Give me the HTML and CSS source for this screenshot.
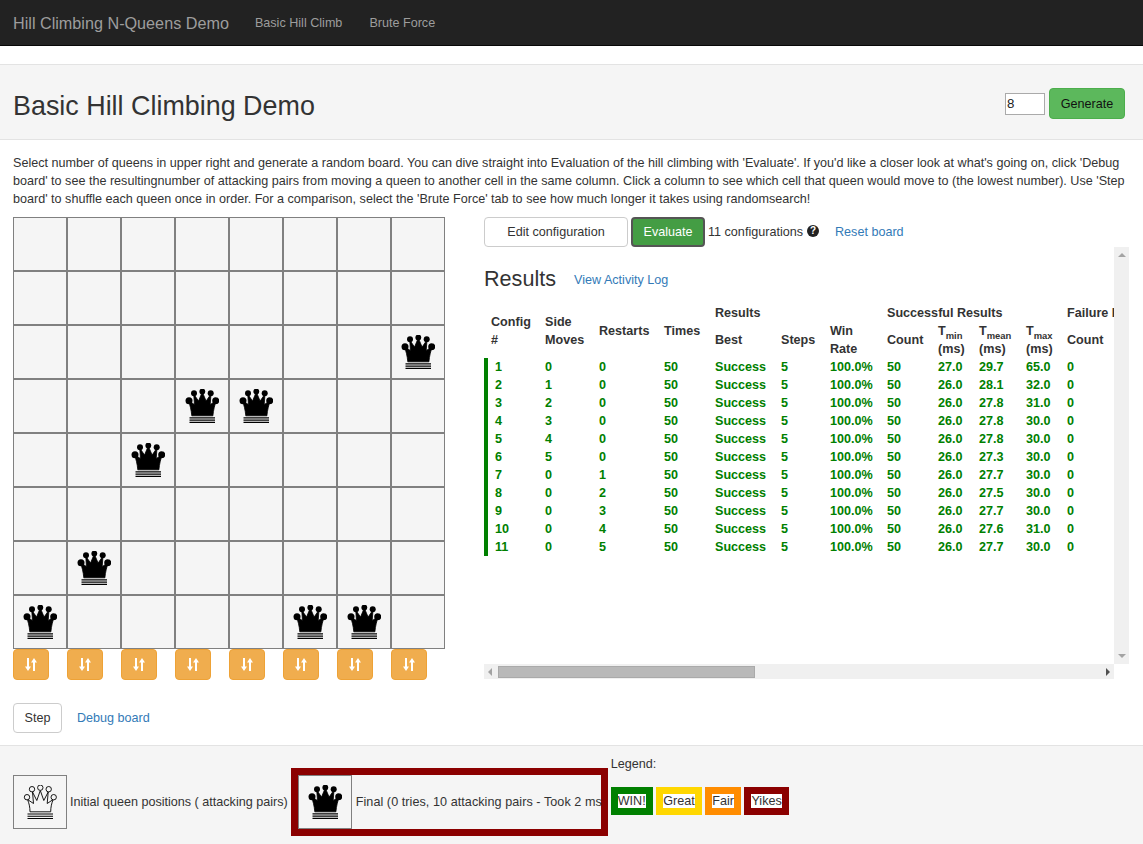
FILE: index.html
```html
<!DOCTYPE html>
<html lang="en">
<head>
	<meta charset="UTF-8">
	<title>Hill Climbing N-Queens Demo</title>
	<link rel="stylesheet" href="styles.css">
</head>
<body>
	<svg class="defs" width="0" height="0">
		<symbol id="queen-black" viewBox="0 0 34 34">
			<circle cx="9" cy="4.200" r="3"/>
			<circle cx="17.300" cy="2.500" r="2.900"/>
			<circle cx="25.700" cy="4.200" r="3"/>
			<circle cx="4" cy="11.800" r="3.500"/>
			<circle cx="30.700" cy="11.800" r="3.500"/>
			<path d="M6.800 26.800 C6.300 21 5 16 3.500 12 L9.500 15.500 L8.700 5 L13.500 12 L17.300 3 L21.100 12 L26 5 L25.200 15.500 L31.200 12 C29.700 16 28.400 21 27.900 26.800 Z" stroke="#000" stroke-width=".8"/>
			<path d="M4.500 28.300h25.500v1.300H4.500zM4.500 30.500h25.500v1.300H4.500zM4.500 32.700h25.500v1.300H4.500z"/>
		</symbol>
		<symbol id="queen-white" viewBox="0 0 34 34">
			<path d="M7 26.800 C7 22 6 18 4.500 14.500 L10.500 18.500 L9.500 7 L13.800 15.500 L17.300 5.500 L20.800 15.500 L25.200 7 L24.200 18.500 L30.200 14.500 C28.700 18 27.700 22 27.700 26.800 Z" fill="#f5f5f5" stroke="#000" stroke-width=".9"/>
			<circle cx="9" cy="4.200" r="2.700" fill="#f5f5f5" stroke="#000" stroke-width=".9"/>
			<circle cx="17.300" cy="2.700" r="2.700" fill="#f5f5f5" stroke="#000" stroke-width=".9"/>
			<circle cx="25.700" cy="4.200" r="2.700" fill="#f5f5f5" stroke="#000" stroke-width=".9"/>
			<circle cx="4" cy="12.200" r="2.700" fill="#f5f5f5" stroke="#000" stroke-width=".9"/>
			<circle cx="30.700" cy="12.200" r="2.700" fill="#f5f5f5" stroke="#000" stroke-width=".9"/>
			<path d="M4.500 28.500h25.500v1H4.500zM4.500 30.700h25.500v1H4.500zM4.500 32.900h25.500v1H4.500z"/>
		</symbol>
		<symbol id="sort" viewBox="0 0 12 13">
			<path d="M2 0h2v8.500h2L3 13 0 8.500h2z"/>
			<path d="M8 13h2V4.500h2L9 0 6 4.500h2z"/>
		</symbol>
	</svg>

	<div class="navbar">
		<a class="brand" href="#">Hill Climbing N-Queens Demo</a>
		<a class="nav-link" href="#">Basic Hill Climb</a>
		<a class="nav-link" href="#">Brute Force</a>
	</div>

	<div class="page-header">
		<h1>Basic Hill Climbing Demo</h1>
		<div class="generate">
			<input class="size-input" type="text" value="8">
			<button class="btn btn-generate">Generate</button>
		</div>
	</div>

	<p class="intro">Select number of queens in upper right and generate a random board. You can dive straight into Evaluation of the hill climbing with 'Evaluate'. If you'd like a closer look at what's going on, click 'Debug board' to see the resultingnumber of attacking pairs from moving a queen to another cell in the same column. Click a column to see which cell that queen would move to (the lowest number). Use 'Step board' to shuffle each queen once in order. For a comparison, select the 'Brute Force' tab to see how much longer it takes using randomsearch!</p>

	<div class="main">
		<div class="left">
			<div class="board">
				<div class="cell"></div><div class="cell"></div><div class="cell"></div><div class="cell"></div><div class="cell"></div><div class="cell"></div><div class="cell"></div><div class="cell"></div>
				<div class="cell"></div><div class="cell"></div><div class="cell"></div><div class="cell"></div><div class="cell"></div><div class="cell"></div><div class="cell"></div><div class="cell"></div>
				<div class="cell"></div><div class="cell"></div><div class="cell"></div><div class="cell"></div><div class="cell"></div><div class="cell"></div><div class="cell"></div><div class="cell"><svg class="queen"><use href="#queen-black"/></svg></div>
				<div class="cell"></div><div class="cell"></div><div class="cell"></div><div class="cell"><svg class="queen"><use href="#queen-black"/></svg></div><div class="cell"><svg class="queen"><use href="#queen-black"/></svg></div><div class="cell"></div><div class="cell"></div><div class="cell"></div>
				<div class="cell"></div><div class="cell"></div><div class="cell"><svg class="queen"><use href="#queen-black"/></svg></div><div class="cell"></div><div class="cell"></div><div class="cell"></div><div class="cell"></div><div class="cell"></div>
				<div class="cell"></div><div class="cell"></div><div class="cell"></div><div class="cell"></div><div class="cell"></div><div class="cell"></div><div class="cell"></div><div class="cell"></div>
				<div class="cell"></div><div class="cell"><svg class="queen"><use href="#queen-black"/></svg></div><div class="cell"></div><div class="cell"></div><div class="cell"></div><div class="cell"></div><div class="cell"></div><div class="cell"></div>
				<div class="cell"><svg class="queen"><use href="#queen-black"/></svg></div><div class="cell"></div><div class="cell"></div><div class="cell"></div><div class="cell"></div><div class="cell"><svg class="queen"><use href="#queen-black"/></svg></div><div class="cell"><svg class="queen"><use href="#queen-black"/></svg></div><div class="cell"></div>
			</div>
			<div class="shuffle-row">
				<button class="shuffle"><svg class="sort-icon"><use href="#sort"/></svg></button>
				<button class="shuffle"><svg class="sort-icon"><use href="#sort"/></svg></button>
				<button class="shuffle"><svg class="sort-icon"><use href="#sort"/></svg></button>
				<button class="shuffle"><svg class="sort-icon"><use href="#sort"/></svg></button>
				<button class="shuffle"><svg class="sort-icon"><use href="#sort"/></svg></button>
				<button class="shuffle"><svg class="sort-icon"><use href="#sort"/></svg></button>
				<button class="shuffle"><svg class="sort-icon"><use href="#sort"/></svg></button>
				<button class="shuffle"><svg class="sort-icon"><use href="#sort"/></svg></button>
			</div>
			<div class="step-row">
				<button class="btn btn-step">Step</button>
				<a href="#">Debug board</a>
			</div>
		</div>

		<div class="right">
			<div class="toolbar">
				<button class="btn btn-edit">Edit configuration</button>
				<button class="btn btn-evaluate">Evaluate</button>
				<span class="config-count">11 configurations</span>
				<span class="help">?</span>
				<a class="reset" href="#">Reset board</a>
			</div>
			<div class="results-frame">
				<div class="results">
					<div class="results-head">
						<h3>Results</h3>
						<a class="log-link" href="#">View Activity Log</a>
					</div>
					<table class="results-table">
						<colgroup>
							<col class="col-54"><col class="col-54"><col class="col-65"><col class="col-51">
							<col class="col-66"><col class="col-49"><col class="col-57">
							<col class="col-51"><col class="col-41"><col class="col-47"><col class="col-41">
							<col class="col-51"><col class="col-41"><col class="col-47"><col>
						</colgroup>
						<thead>
							<tr>
								<th rowspan="2">Config<br>#</th>
								<th rowspan="2">Side<br>Moves</th>
								<th rowspan="2">Restarts</th>
								<th rowspan="2">Times</th>
								<th colspan="3" class="group">Results</th>
								<th colspan="4" class="group">Successful Results</th>
								<th colspan="4" class="group">Failure Results</th>
							</tr>
							<tr>
								<th>Best</th>
								<th>Steps</th>
								<th>Win<br>Rate</th>
								<th>Count</th>
								<th>T<sub>min</sub><br>(ms)</th>
								<th>T<sub>mean</sub><br>(ms)</th>
								<th>T<sub>max</sub><br>(ms)</th>
								<th>Count</th>
								<th>T<sub>min</sub><br>(ms)</th>
								<th>T<sub>mean</sub><br>(ms)</th>
								<th>T<sub>max</sub><br>(ms)</th>
							</tr>
						</thead>
						<tbody>
							<tr><td>1</td><td>0</td><td>0</td><td>50</td><td>Success</td><td>5</td><td>100.0%</td><td>50</td><td>27.0</td><td>29.7</td><td>65.0</td><td>0</td><td></td><td></td><td></td></tr>
							<tr><td>2</td><td>1</td><td>0</td><td>50</td><td>Success</td><td>5</td><td>100.0%</td><td>50</td><td>26.0</td><td>28.1</td><td>32.0</td><td>0</td><td></td><td></td><td></td></tr>
							<tr><td>3</td><td>2</td><td>0</td><td>50</td><td>Success</td><td>5</td><td>100.0%</td><td>50</td><td>26.0</td><td>27.8</td><td>31.0</td><td>0</td><td></td><td></td><td></td></tr>
							<tr><td>4</td><td>3</td><td>0</td><td>50</td><td>Success</td><td>5</td><td>100.0%</td><td>50</td><td>26.0</td><td>27.8</td><td>30.0</td><td>0</td><td></td><td></td><td></td></tr>
							<tr><td>5</td><td>4</td><td>0</td><td>50</td><td>Success</td><td>5</td><td>100.0%</td><td>50</td><td>26.0</td><td>27.8</td><td>30.0</td><td>0</td><td></td><td></td><td></td></tr>
							<tr><td>6</td><td>5</td><td>0</td><td>50</td><td>Success</td><td>5</td><td>100.0%</td><td>50</td><td>26.0</td><td>27.3</td><td>30.0</td><td>0</td><td></td><td></td><td></td></tr>
							<tr><td>7</td><td>0</td><td>1</td><td>50</td><td>Success</td><td>5</td><td>100.0%</td><td>50</td><td>26.0</td><td>27.7</td><td>30.0</td><td>0</td><td></td><td></td><td></td></tr>
							<tr><td>8</td><td>0</td><td>2</td><td>50</td><td>Success</td><td>5</td><td>100.0%</td><td>50</td><td>26.0</td><td>27.5</td><td>30.0</td><td>0</td><td></td><td></td><td></td></tr>
							<tr><td>9</td><td>0</td><td>3</td><td>50</td><td>Success</td><td>5</td><td>100.0%</td><td>50</td><td>26.0</td><td>27.7</td><td>30.0</td><td>0</td><td></td><td></td><td></td></tr>
							<tr><td>10</td><td>0</td><td>4</td><td>50</td><td>Success</td><td>5</td><td>100.0%</td><td>50</td><td>26.0</td><td>27.6</td><td>31.0</td><td>0</td><td></td><td></td><td></td></tr>
							<tr><td>11</td><td>0</td><td>5</td><td>50</td><td>Success</td><td>5</td><td>100.0%</td><td>50</td><td>26.0</td><td>27.7</td><td>30.0</td><td>0</td><td></td><td></td><td></td></tr>
						</tbody>
					</table>
				</div>
				<div class="scroll-v">
					<span class="arrow arrow-up"></span>
					<span class="arrow arrow-down"></span>
				</div>
				<div class="scroll-h">
					<span class="arrow arrow-left"></span>
					<span class="scroll-thumb"></span>
					<span class="arrow arrow-right"></span>
				</div>
			</div>
		</div>
	</div>

	<div class="footer">
		<div class="initial">
			<div class="thumb"><svg class="queen"><use href="#queen-white"/></svg></div>
			<span class="status-text">Initial queen positions ( attacking pairs)</span>
		</div>
		<div class="final">
			<div class="thumb"><svg class="queen"><use href="#queen-black"/></svg></div>
			<span class="status-text">Final (0 tries, 10 attacking pairs - Took 2 ms</span>
		</div>
		<div class="legend">
			<div class="legend-title">Legend:</div>
			<div class="legend-items">
				<span class="tag tag-win"><span>WIN!</span></span>
				<span class="tag tag-great"><span>Great</span></span>
				<span class="tag tag-fair"><span>Fair</span></span>
				<span class="tag tag-yikes"><span>Yikes</span></span>
			</div>
		</div>
	</div>
</body>
</html>
```

FILE: styles.css
```css
html, body {
	margin: 0;
	padding: 0;
}
body {
	background: #fff;
	color: #333;
	display: flex;
	flex-direction: column;
	font-family: "Liberation Sans", Arial, sans-serif;
	font-size: 12.6px;
	height: 100vh;
	line-height: 18px;
	overflow: hidden;
}
a {
	color: #337ab7;
	text-decoration: none;
}
.defs {
	position: absolute;
}
.navbar {
	align-items: center;
	background: #222;
	border-bottom: 1px solid #080808;
	box-sizing: border-box;
	display: flex;
	flex: none;
	height: 46px;
	padding-left: 13px;
}
.brand {
	color: #9d9d9d;
	font-size: 16.2px;
	margin-right: 26px;
}
.nav-link {
	color: #9d9d9d;
	margin-right: 27px;
}
.page-header {
	align-items: center;
	background: #f5f5f5;
	border-bottom: 1px solid #e3e3e3;
	border-top: 1px solid #e3e3e3;
	box-sizing: border-box;
	display: flex;
	flex: none;
	height: 76px;
	justify-content: space-between;
	margin-top: 18px;
	padding: 3px 18px 0 13px;
}
.page-header h1 {
	font-size: 26.9px;
	font-weight: 400;
	line-height: 30px;
	margin: 5px 0 0;
}
.generate {
	align-items: center;
	display: flex;
	gap: 4px;
}
.size-input {
	border: 1px solid #aaa;
	box-sizing: border-box;
	color: #222;
	font-family: inherit;
	font-size: 13.3px;
	height: 22px;
	padding: 0 1px;
	width: 40px;
}
.btn {
	background: #fff;
	border: 1px solid #ccc;
	border-radius: 4px;
	box-sizing: border-box;
	color: #333;
	font-family: inherit;
	font-size: 12.6px;
	height: 31px;
	line-height: 18px;
	padding: 0 12px;
}
.btn-generate {
	background: #5cb85c;
	border-color: #4cae4c;
	color: #111;
	padding: 0;
	width: 76px;
}
.intro {
	flex: none;
	margin: 14px 0 0;
	padding: 0 13px;
}
.main {
	display: flex;
	flex: none;
	gap: 39px;
	margin-top: 9px;
	padding-left: 13px;
}
.left {
	flex: none;
	width: 432px;
}
.board {
	display: grid;
	grid-template-columns: repeat(8, 54px);
	grid-auto-rows: 54px;
}
.cell {
	background: #f5f5f5;
	border: 1px solid #808080;
	box-sizing: border-box;
	padding: 9px;
}
.queen {
	display: block;
	height: 34px;
	width: 34px;
}
.shuffle-row {
	display: grid;
	grid-template-columns: repeat(8, 54px);
}
.shuffle {
	align-items: center;
	background: #f0ad4e;
	border: 1px solid #eea236;
	border-radius: 4px;
	box-sizing: border-box;
	display: flex;
	height: 31px;
	justify-content: center;
	padding: 0;
	width: 36px;
}
.sort-icon {
	fill: #fff;
	height: 13px;
	width: 12px;
}
.step-row {
	align-items: center;
	display: flex;
	gap: 15px;
	margin-top: 23px;
}
.btn-step {
	height: 30px;
	padding: 0;
	width: 49px;
}
.right {
	flex: none;
	width: 645px;
}
.toolbar {
	align-items: center;
	display: flex;
	height: 30px;
}
.toolbar .btn {
	height: 30px;
}
.btn-edit {
	padding: 0;
	width: 144px;
}
.btn-evaluate {
	background: #449d44;
	border: 2px solid #555;
	color: #fff;
	margin-left: 3px;
	padding: 0;
	width: 74px;
}
.config-count {
	margin-left: 3px;
}
.help {
	background: #222;
	border-radius: 50%;
	color: #fff;
	font-size: 10px;
	font-weight: 700;
	height: 12px;
	line-height: 12px;
	margin: -3px 0 0 4px;
	text-align: center;
	width: 12px;
}
.reset {
	margin-left: 16px;
}
.results-frame {
	display: grid;
	grid-template-columns: 630px 15px;
	grid-template-rows: 417px 15px;
}
.results {
	overflow: hidden;
}
.results-head {
	align-items: center;
	display: flex;
	gap: 18px;
	padding-top: 20px;
}
.results-head h3 {
	font-size: 21.6px;
	font-weight: 400;
	line-height: 24px;
	margin: 0;
}
.log-link {
	margin-top: 2px;
}
.results-table {
	border-collapse: separate;
	border-spacing: 0;
	margin-top: 13px;
	table-layout: fixed;
	white-space: nowrap;
	width: 1488px;
}
.col-41 { width: 41px; }
.col-47 { width: 47px; }
.col-49 { width: 49px; }
.col-51 { width: 51px; }
.col-54 { width: 54px; }
.col-57 { width: 57px; }
.col-65 { width: 65px; }
.col-66 { width: 66px; }
.results-table th {
	font-weight: 700;
	padding: 0 7px;
	text-align: left;
	vertical-align: middle;
}
.results-table sub {
	font-size: 75%;
	line-height: 0;
}
.results-table td {
	color: #008000;
	font-weight: 700;
	padding: 0 7px;
}
.results-table td:first-child {
	border-left: 4px solid #008000;
}
.results-table .group {
	height: 18px;
}
/* scrollbars are drawn, the browser hides the real ones when photographed */
.scroll-v {
	align-items: center;
	background: #f0f0f0;
	display: flex;
	flex-direction: column;
	justify-content: space-between;
	padding: 6px 0;
}
.scroll-h {
	align-items: center;
	background: #f0f0f0;
	display: flex;
	grid-column: 1;
	padding: 0 4px 0 4px;
}
.scroll-thumb {
	background: #b9b9b9;
	border: 1px solid #aaa;
	box-sizing: border-box;
	height: 12px;
	margin-left: 6px;
	margin-right: auto;
	width: 257px;
}
.arrow {
	border: 4px solid transparent;
	height: 0;
	width: 0;
}
.arrow-up {
	border-bottom-color: #a3a3a3;
	border-top-width: 0;
}
.arrow-down {
	border-bottom-width: 0;
	border-top-color: #a3a3a3;
}
.arrow-left {
	border-left-width: 0;
	border-right-color: #a3a3a3;
}
.arrow-right {
	border-left-color: #505050;
	border-right-width: 0;
}
.footer {
	align-items: flex-start;
	background: #f5f5f5;
	border-top: 1px solid #e3e3e3;
	display: flex;
	flex: 1;
	margin-top: 12px;
	padding: 9px 0 0 13px;
}
.initial {
	align-items: center;
	display: flex;
	margin-top: 20px;
}
.thumb {
	border: 1px solid #808080;
	box-sizing: border-box;
	flex: none;
	height: 54px;
	padding: 9px;
	width: 54px;
}
.status-text {
	margin-left: 3px;
	white-space: nowrap;
}
.final {
	align-items: center;
	border: 7px solid #8b0000;
	box-sizing: border-box;
	display: flex;
	flex: none;
	height: 68px;
	margin-left: 3px;
	margin-top: 13px;
	width: 317px;
}
.final .status-text {
	letter-spacing: .06px;
	margin-left: 4px;
}
.legend {
	margin-left: 3px;
}
.legend-title {
	margin-bottom: 14px;
}
.legend-items {
	display: flex;
	gap: 3.5px;
}
.tag {
	border: 7px solid;
	line-height: 14px;
}
.tag span {
	background: #fff;
	display: block;
}
.tag-win { border-color: #008000; }
.tag-great { border-color: #ffd700; }
.tag-fair { border-color: #ff8c00; }
.tag-yikes { border-color: #8b0000; }
```
